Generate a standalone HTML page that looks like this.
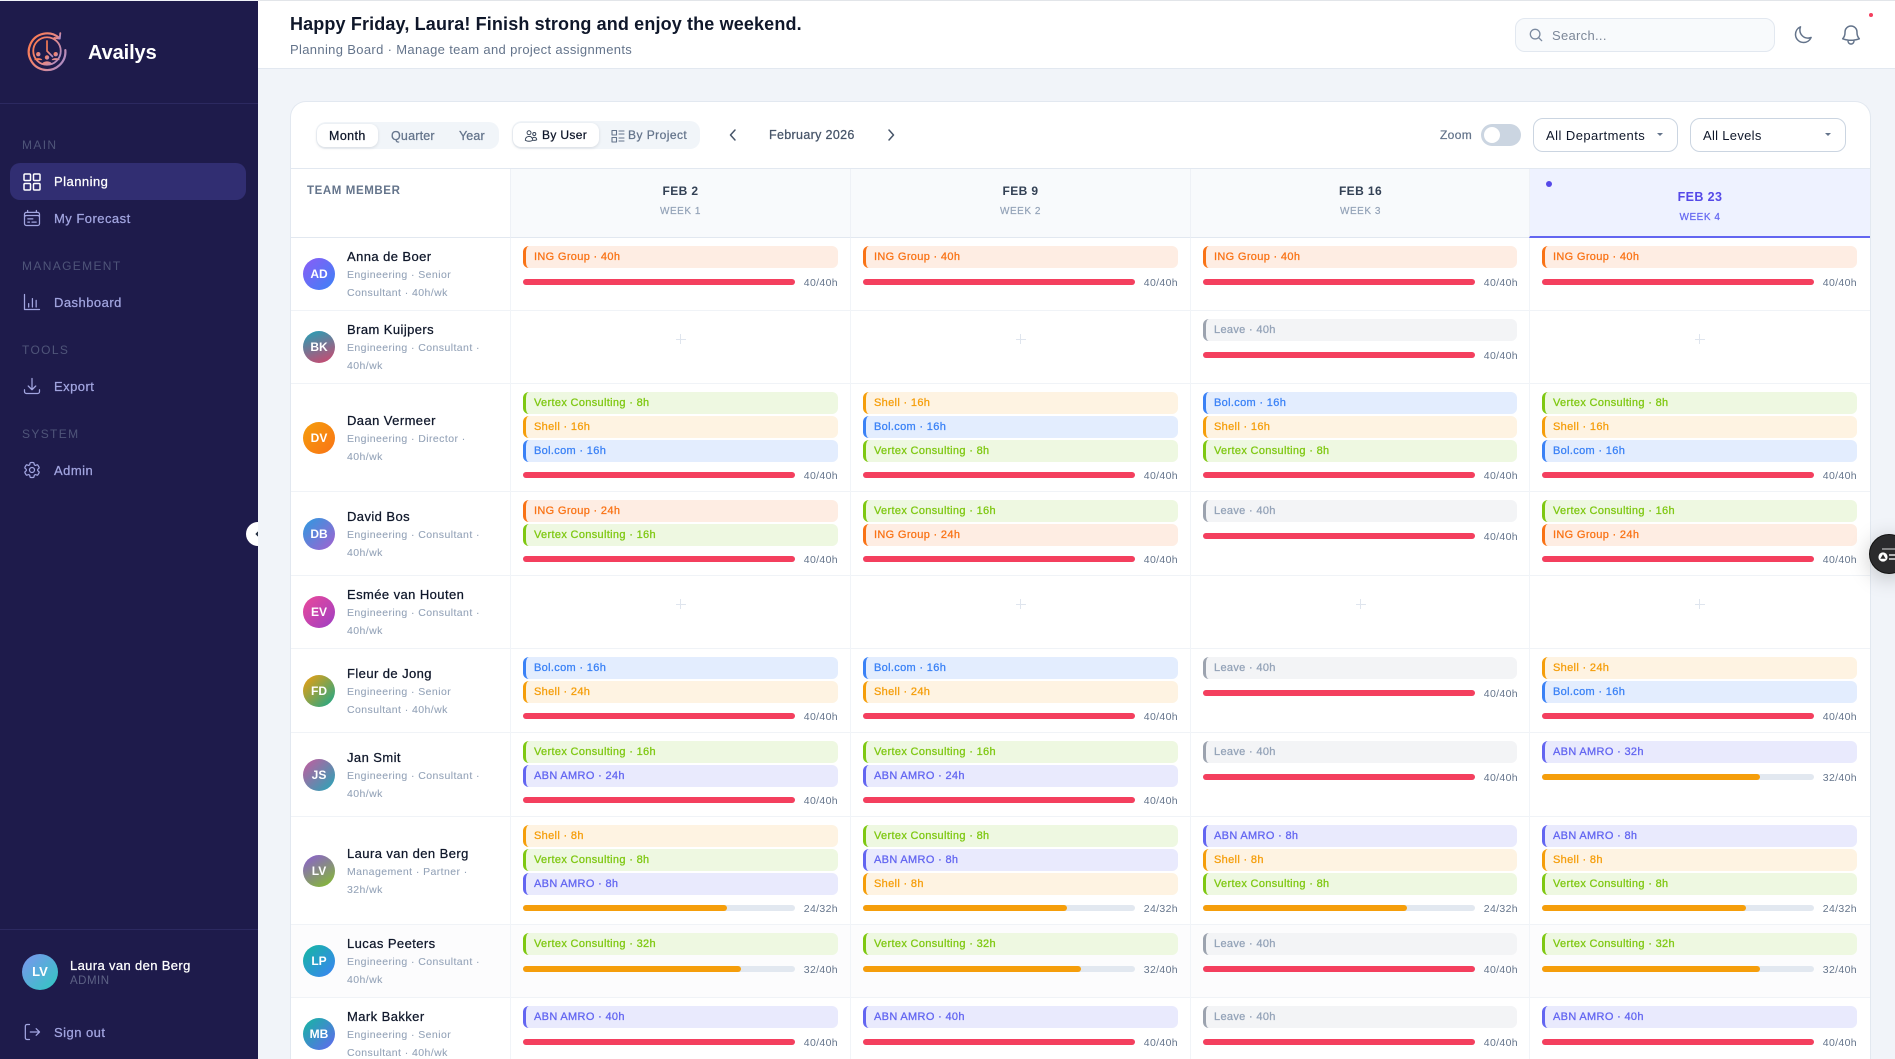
<!DOCTYPE html>
<html lang="en"><head><meta charset="utf-8"><title>Availys Planning</title>
<style>
html,body{margin:0;padding:0;width:1895px;height:1059px;overflow:hidden;background:#f1f4f9;font-family:"Liberation Sans",sans-serif;color:#0f172a}
*{box-sizing:border-box}
#wrap{position:relative;width:1895px;height:1059px;overflow:hidden;background:#f1f4f9}
.t{position:absolute;white-space:nowrap;line-height:16px}
.m{-webkit-text-stroke:.25px currentColor}
#side{position:absolute;left:0;top:1px;width:258px;height:1058px;background:#1e1b4b}
.sl{position:absolute;left:0;width:258px;height:1px;background:#2c2960}
.nh{left:22px;font-size:12px;letter-spacing:1.35px;color:#4f5579}
.ni{left:54px;font-size:13px;letter-spacing:.47px;color:#a2a5e0;-webkit-text-stroke:.25px currentColor}
.ic{position:absolute;fill:none;stroke:currentColor;stroke-width:1.5;stroke-linecap:round;stroke-linejoin:round;color:#a2a5e0}
#top{position:absolute;left:258px;top:0;width:1637px;height:69px;background:#fff;border-top:1px solid #e2e5e9;border-bottom:1px solid #e2e8f0}
#card{position:absolute;left:290px;top:101px;width:1581px;height:958px;background:#fff;border:1px solid #e2e8f0;border-bottom:0;border-radius:16px 16px 0 0}
.seg{position:absolute;background:#f1f5f9;border-radius:10px}
.pill{position:absolute;background:#fff;border-radius:8px;box-shadow:0 1px 3px rgba(15,23,42,.12)}
.sel{position:absolute;top:118px;height:34px;border:1px solid #cbd5e1;border-radius:10px;background:#fff}
.sel b{position:absolute;top:14px;width:0;height:0;border-left:3px solid transparent;border-right:3px solid transparent;border-top:3.5px solid #64748b}
.hd{position:absolute;top:169px;height:69px;width:340px;background:#f8fafc;border-left:1px solid #eef1f6;border-bottom:1px solid #e2e8f0;text-align:center}
.hd div{position:absolute;left:0;width:100%;white-space:nowrap}
.f{top:14px;font-size:12px;line-height:16px;font-weight:700;letter-spacing:.4px;color:#334155}
.w{top:35px;font-size:10px;line-height:16px;letter-spacing:.55px;color:#94a3b8;-webkit-text-stroke:.2px currentColor}
.ln{position:absolute;top:238px;width:1px;height:821px;background:#f1f4f8}
.r{position:absolute;left:291px;width:1579px;border-top:1px solid #f0f3f7}
.av{position:absolute;left:12px;top:50%;margin-top:-16px;width:32px;height:32px;border-radius:50%;color:#fff;font-size:12px;font-weight:700;line-height:32px;text-align:center}
.tm{position:absolute;left:56px;top:50%;margin-top:-26px;white-space:nowrap;font-size:10.5px;line-height:18px;color:#94a3b8;letter-spacing:.42px;-webkit-text-stroke:.08px currentColor}
.tm b{display:block;font-weight:400;font-size:13px;letter-spacing:.42px;color:#0f172a;-webkit-text-stroke:.25px currentColor}
.c{position:absolute;top:0;width:339px;padding:8px 12px 0}
.c1{left:220px}.c2{left:560px}.c3{left:900px}.c4{left:1239px}
.k{width:315px;height:21.6px;margin-bottom:2.4px;border-left:3px solid;border-radius:6px;padding-left:8px;font-size:11px;line-height:22px;letter-spacing:.33px;white-space:nowrap;-webkit-text-stroke:.28px currentColor}
.c3 .k{width:314px}
.i{background:#feede3;color:#f97316;border-color:#f97316}
.s{background:#fef3e2;color:#f59e0b;border-color:#f59e0b}
.v{background:#eef8e1;color:#7fc812;border-color:#7fc812}
.o{background:#e3edfe;color:#3b82f6;border-color:#3b82f6}
.a{background:#e9eafd;color:#6366f1;border-color:#6366f1}
.l{background:#f3f4f6;color:#94a3b8;border-color:#9ca3af}
.p{position:relative;width:272px;height:6px;margin-top:10.8px;background:#e2e8f0;border-radius:3px}
.k:first-child:nth-last-child(2)+.p{margin-top:11.4px}
.p i{display:block;height:6px;border-radius:3px}
.p u{position:absolute;left:272px;width:43px;top:-4px;line-height:16px;text-align:right;text-decoration:none;font-size:10.5px;letter-spacing:.35px;color:#64748b}
.R{width:100%;background:#f43f5e}.H{width:75%;background:#f59e0b}.E{width:80%;background:#f59e0b}
.pl{position:absolute;top:23px;left:50%;margin-left:-5px;width:10px;height:10px;background:linear-gradient(#dfe5ee,#dfe5ee) 0 4.5px/10px 1px no-repeat,linear-gradient(#dfe5ee,#dfe5ee) 4.5px 0/1px 10px no-repeat}
</style></head><body><div id="wrap">

<div id="side">
<svg style="position:absolute;left:25px;top:28px" width="44" height="44" viewBox="0 0 48 48" fill="none">
<defs><linearGradient id="lg" x1="0" y1="0.2" x2="1" y2="0.8"><stop offset="0" stop-color="#fb7a50"/><stop offset=".55" stop-color="#e58a8a"/><stop offset="1" stop-color="#a98cc8"/></linearGradient></defs>
<path d="M37 9.5A20 20 0 1 0 44 23" stroke="url(#lg)" stroke-width="2.4" stroke-linecap="round"/>
<path d="M38.5 4.5l-.6 6-6-.8" stroke="url(#lg)" stroke-width="2" stroke-linecap="round" stroke-linejoin="round"/>
<circle cx="24" cy="24" r="15" stroke="url(#lg)" stroke-width="2"/>
<path d="M24 13v11l6 6" stroke="url(#lg)" stroke-width="1.8" stroke-linecap="round" stroke-linejoin="round"/>
<circle cx="14.5" cy="27.5" r="2.4" fill="url(#lg)"/><circle cx="33.5" cy="27.5" r="2.4" fill="url(#lg)"/><circle cx="24" cy="31" r="2.4" fill="url(#lg)"/>
<path d="M10 34c1-3 8-3 9 0zM29 34c1-3 8-3 9 0zM18 39c1-5 11-5 12 0z" fill="url(#lg)"/>
</svg>
<div class="t" style="left:88px;top:42px;line-height:20px;font-size:20px;font-weight:700;color:#fff;letter-spacing:-.1px">Availys</div>
<div class="sl" style="top:102px"></div>
<div class="t nh" style="top:136px">MAIN</div>
<div style="position:absolute;left:10px;top:162px;width:236px;height:37px;border-radius:10px;background:#312e72"></div>
<svg class="ic" style="left:23px;top:172px;color:#fff" width="18" height="18" viewBox="0 0 18 18"><rect x="1" y="1" width="6.5" height="6.5" rx="1"/><rect x="10.5" y="1" width="6.5" height="6.5" rx="1"/><rect x="1" y="10.5" width="6.5" height="6.5" rx="1"/><rect x="10.5" y="10.5" width="6.5" height="6.5" rx="1"/></svg>
<div class="t ni" style="top:173px;color:#fff">Planning</div>
<svg class="ic" style="left:22px;top:207px" width="20" height="20" viewBox="0 0 24 24"><path d="M6.75 3v2.25M17.25 3v2.25M3 18.75V7.5a2.25 2.25 0 012.25-2.25h13.5A2.25 2.25 0 0121 7.5v11.25m-18 0A2.25 2.25 0 005.25 21h13.5A2.25 2.25 0 0021 18.75m-18 0v-7.5A2.25 2.25 0 015.25 9h13.5A2.25 2.25 0 0121 11.25v7.5"/><path d="M7 13h6M7 17h2M12 17h5"/></svg>
<div class="t ni" style="top:210px">My Forecast</div>
<div class="t nh" style="top:257px">MANAGEMENT</div>
<svg class="ic" style="left:22px;top:291px" width="20" height="20" viewBox="0 0 24 24"><path d="M3 3v18h18M8 18v-4M12.5 18V8M17 18v-8"/></svg>
<div class="t ni" style="top:294px">Dashboard</div>
<div class="t nh" style="top:341px">TOOLS</div>
<svg class="ic" style="left:22px;top:375px" width="20" height="20" viewBox="0 0 24 24"><path d="M3 16.5v2.25A2.25 2.25 0 005.25 21h13.5A2.25 2.25 0 0021 18.75V16.5M16.5 12L12 16.5m0 0L7.5 12m4.5 4.5V3"/></svg>
<div class="t ni" style="top:378px">Export</div>
<div class="t nh" style="top:425px">SYSTEM</div>
<svg class="ic" style="left:22px;top:459px" width="20" height="20" viewBox="0 0 24 24"><path d="M9.594 3.94c.09-.542.56-.94 1.11-.94h2.593c.55 0 1.02.398 1.11.94l.213 1.281c.063.374.313.686.645.87.074.04.147.083.22.127.325.196.72.257 1.075.124l1.217-.456a1.125 1.125 0 011.37.49l1.296 2.247a1.125 1.125 0 01-.26 1.431l-1.003.827c-.293.24-.438.613-.431.992a6.759 6.759 0 010 .255c-.007.378.138.75.43.99l1.005.828c.424.35.534.954.26 1.43l-1.298 2.247a1.125 1.125 0 01-1.369.491l-1.217-.456c-.355-.133-.75-.072-1.076.124a6.57 6.57 0 01-.22.128c-.331.183-.581.495-.644.869l-.213 1.28c-.09.543-.56.941-1.11.941h-2.594c-.55 0-1.02-.398-1.11-.94l-.213-1.281c-.062-.374-.312-.686-.644-.87a6.52 6.52 0 01-.22-.127c-.325-.196-.72-.257-1.076-.124l-1.217.456a1.125 1.125 0 01-1.369-.49l-1.297-2.247a1.125 1.125 0 01.26-1.431l1.004-.827c.292-.24.437-.613.43-.992a6.932 6.932 0 010-.255c.007-.378-.138-.75-.43-.99l-1.004-.828a1.125 1.125 0 01-.26-1.43l1.297-2.247a1.125 1.125 0 011.37-.491l1.216.456c.356.133.751.072 1.076-.124.072-.044.146-.087.22-.128.332-.183.582-.495.644-.869l.214-1.281z"/><circle cx="12" cy="12" r="3"/></svg>
<div class="t ni" style="top:462px">Admin</div>
<div class="sl" style="top:928px"></div>
<div style="position:absolute;left:22px;top:953px;width:36px;height:36px;border-radius:50%;background:linear-gradient(135deg,#7c93f0,#2fc9c0);color:#fff;font-size:13px;font-weight:700;line-height:36px;text-align:center">LV</div>
<div class="t m" style="left:70px;top:957px;font-size:13px;letter-spacing:.36px;color:#fff">Laura van den Berg</div>
<div class="t" style="left:70px;top:972px;font-size:11.5px;letter-spacing:.5px;color:#5d6285">ADMIN</div>
<svg class="ic" style="left:22px;top:1021px" width="20" height="20" viewBox="0 0 24 24"><path d="M9 3H6a2 2 0 00-2 2v14a2 2 0 002 2h3M10 12h11M17 8l4 4-4 4"/></svg>
<div class="t ni" style="top:1024px">Sign out</div>
</div>
<div style="position:absolute;left:246px;top:522px;width:12px;height:24px;background:#fff;border-radius:12px 0 0 12px"></div>
<svg style="position:absolute;left:255px;top:530px" width="3" height="8" viewBox="0 0 3 8" fill="none" stroke="#1e293b" stroke-width="1.6"><path d="M4.5 1L1.5 4l3 3"/></svg>

<div id="top">
<div class="t" style="left:32px;top:13px;line-height:20px;font-size:18px;font-weight:700;letter-spacing:.14px;color:#0f172a">Happy Friday, Laura! Finish strong and enjoy the weekend.</div>
<div class="t" style="left:32px;top:41px;font-size:13px;letter-spacing:.34px;color:#64748b">Planning Board · Manage team and project assignments</div>
</div>
<div style="position:absolute;left:1515px;top:18px;width:260px;height:34px;background:#f8fafc;border:1px solid #e2e8f0;border-radius:10px"></div>
<svg class="ic" style="left:1529px;top:28px;color:#7c8ba1" width="14" height="14" viewBox="0 0 16 16"><circle cx="7" cy="7" r="5.5"/><path d="M11 11l3.5 3.5"/></svg>
<div class="t" style="left:1552px;top:28px;font-size:13px;letter-spacing:.3px;color:#7c8798">Search...</div>
<svg class="ic" style="left:1793px;top:25px;color:#64748b;stroke-width:1.8" width="20" height="20" viewBox="0 0 24 24"><path d="M21.752 15.002A9.718 9.718 0 0118 15.75c-5.385 0-9.75-4.365-9.75-9.75 0-1.33.266-2.597.748-3.752A9.753 9.753 0 003 11.25C3 16.635 7.365 21 12.75 21a9.753 9.753 0 009.002-5.998z"/></svg>
<svg class="ic" style="left:1839px;top:23px;color:#64748b" width="24" height="24" viewBox="0 0 24 24"><path d="M14.857 17.082a23.848 23.848 0 005.454-1.31A8.967 8.967 0 0118 9.75v-.7V9A6 6 0 006 9v.75a8.967 8.967 0 01-2.312 6.022c1.733.64 3.56 1.085 5.455 1.31m5.714 0a24.255 24.255 0 01-5.714 0m5.714 0a3 3 0 11-5.714 0"/></svg>
<div style="position:absolute;left:1869px;top:13px;width:4px;height:4px;border-radius:50%;background:#f43f5e"></div>

<div id="card"></div>
<div class="seg" style="left:316px;top:122px;width:183px;height:27px"></div>
<div class="pill" style="left:317px;top:124px;width:61px;height:23px"></div>
<div class="t m" style="left:329px;top:128px;font-size:12.5px;letter-spacing:.4px;color:#0f172a">Month</div>
<div class="t m" style="left:391px;top:128px;font-size:12.5px;letter-spacing:.2px;color:#64748b">Quarter</div>
<div class="t m" style="left:459px;top:128px;font-size:12.5px;letter-spacing:.12px;color:#64748b">Year</div>
<div class="seg" style="left:512px;top:121px;width:188px;height:28px"></div>
<div class="pill" style="left:513px;top:123px;width:86px;height:24px"></div>
<svg class="ic" style="left:524px;top:129px;color:#334155;stroke-width:1.6" width="14" height="14" viewBox="0 0 24 24"><path d="M15 19.128a9.38 9.38 0 002.625.372 9.337 9.337 0 004.121-.952 4.125 4.125 0 00-7.533-2.493M15 19.128v-.003c0-1.113-.285-2.16-.786-3.07M15 19.128v.106A12.318 12.318 0 018.624 21c-2.331 0-4.512-.645-6.374-1.766l-.001-.109a6.375 6.375 0 0111.964-3.07M12 6.375a3.375 3.375 0 11-6.75 0 3.375 3.375 0 016.75 0zm8.25 2.25a2.625 2.625 0 11-5.25 0 2.625 2.625 0 015.25 0z"/></svg>
<div class="t m" style="left:542px;top:127px;font-size:12px;letter-spacing:.35px;color:#0f172a">By User</div>
<svg class="ic" style="left:611px;top:129px;color:#64748b;stroke-width:1.1" width="14" height="14" viewBox="0 0 14 14"><rect x="1" y="1.5" width="4.5" height="4.5"/><rect x="1" y="8.5" width="4.5" height="4.5"/><path d="M8 2h5M8 5h5M8 9h5M8 12h5"/></svg>
<div class="t m" style="left:628px;top:127px;font-size:12px;letter-spacing:.45px;color:#64748b">By Project</div>
<svg class="ic" style="left:728px;top:129px;color:#475569" width="10" height="12" viewBox="0 0 10 12"><path d="M7 1L2.5 6 7 11"/></svg>
<div class="t m" style="left:769px;top:127px;font-size:12.5px;letter-spacing:.34px;color:#475569">February 2026</div>
<svg class="ic" style="left:886px;top:129px;color:#475569" width="10" height="12" viewBox="0 0 10 12"><path d="M3 1l4.5 5L3 11"/></svg>
<div class="t m" style="left:1440px;top:127px;font-size:12px;letter-spacing:.35px;color:#64748b">Zoom</div>
<div style="position:absolute;left:1481px;top:124px;width:40px;height:22px;border-radius:11px;background:#cbd5e1"></div>
<div style="position:absolute;left:1484px;top:127px;width:16px;height:16px;border-radius:50%;background:#fff"></div>
<div class="sel" style="left:1533px;width:145px"><b style="left:123px"></b></div>
<div class="t" style="left:1546px;top:128px;font-size:13px;letter-spacing:.45px;color:#0f172a">All Departments</div>
<div class="sel" style="left:1690px;width:156px"><b style="left:134px"></b></div>
<div class="t" style="left:1703px;top:128px;font-size:13px;letter-spacing:.3px;color:#0f172a">All Levels</div>

<div style="position:absolute;left:291px;top:168px;width:1579px;height:1px;background:#e2e8f0"></div>
<div style="position:absolute;left:291px;top:237px;width:220px;height:1px;background:#e2e8f0"></div>
<div class="t" style="left:307px;top:183px;font-size:11.5px;font-weight:700;letter-spacing:.6px;color:#64748b">TEAM MEMBER</div>
<div class="hd" style="left:510px"><div class="f">FEB 2</div><div class="w">WEEK 1</div></div>
<div class="hd" style="left:850px"><div class="f">FEB 9</div><div class="w">WEEK 2</div></div>
<div class="hd" style="left:1190px"><div class="f">FEB 16</div><div class="w">WEEK 3</div></div>
<div class="hd" style="left:1529px;width:341px;background:#eef2ff;border-bottom:2px solid #6366f1"><div class="f" style="top:20px;color:#5549e8;font-size:12.5px">FEB 23</div><div class="w" style="top:41px;color:#6366f1">WEEK 4</div><span style="position:absolute;left:16px;top:12px;width:6px;height:6px;border-radius:50%;background:#5549e8"></span></div>

<div class="r" style="top:237px;height:73px;border-top:0"><div class="av" style="background:linear-gradient(135deg,#8b5cf6,#3b82f6)">AD</div><div class="tm"><b>Anna de Boer</b>Engineering · Senior<br>Consultant · 40h/wk</div>
<div class="c c1"><div class="k i" style="margin-top:1px">ING Group · 40h</div><div class="p"><i class="R"></i><u>40/40h</u></div></div>
<div class="c c2"><div class="k i" style="margin-top:1px">ING Group · 40h</div><div class="p"><i class="R"></i><u>40/40h</u></div></div>
<div class="c c3"><div class="k i" style="margin-top:1px">ING Group · 40h</div><div class="p"><i class="R"></i><u>40/40h</u></div></div>
<div class="c c4"><div class="k i" style="margin-top:1px">ING Group · 40h</div><div class="p"><i class="R"></i><u>40/40h</u></div></div></div>

<div class="r" style="top:310px;height:73px"><div class="av" style="background:linear-gradient(160deg,#1fa3b8,#d4446c)">BK</div><div class="tm"><b>Bram Kuijpers</b>Engineering · Consultant ·<br>40h/wk</div>
<div class="c c1"><div class="pl"></div></div><div class="c c2"><div class="pl"></div></div>
<div class="c c3"><div class="k l">Leave · 40h</div><div class="p"><i class="R"></i><u>40/40h</u></div></div>
<div class="c c4"><div class="pl"></div></div></div>

<div class="r" style="top:383px;height:108px"><div class="av" style="background:linear-gradient(135deg,#f59e0b,#f97316)">DV</div><div class="tm"><b>Daan Vermeer</b>Engineering · Director ·<br>40h/wk</div>
<div class="c c1"><div class="k v">Vertex Consulting · 8h</div><div class="k s">Shell · 16h</div><div class="k o">Bol.com · 16h</div><div class="p"><i class="R"></i><u>40/40h</u></div></div>
<div class="c c2"><div class="k s">Shell · 16h</div><div class="k o">Bol.com · 16h</div><div class="k v">Vertex Consulting · 8h</div><div class="p"><i class="R"></i><u>40/40h</u></div></div>
<div class="c c3"><div class="k o">Bol.com · 16h</div><div class="k s">Shell · 16h</div><div class="k v">Vertex Consulting · 8h</div><div class="p"><i class="R"></i><u>40/40h</u></div></div>
<div class="c c4"><div class="k v">Vertex Consulting · 8h</div><div class="k s">Shell · 16h</div><div class="k o">Bol.com · 16h</div><div class="p"><i class="R"></i><u>40/40h</u></div></div></div>

<div class="r" style="top:491px;height:84px"><div class="av" style="background:linear-gradient(135deg,#2b9be0,#a560d0)">DB</div><div class="tm"><b>David Bos</b>Engineering · Consultant ·<br>40h/wk</div>
<div class="c c1"><div class="k i">ING Group · 24h</div><div class="k v">Vertex Consulting · 16h</div><div class="p"><i class="R"></i><u>40/40h</u></div></div>
<div class="c c2"><div class="k v">Vertex Consulting · 16h</div><div class="k i">ING Group · 24h</div><div class="p"><i class="R"></i><u>40/40h</u></div></div>
<div class="c c3"><div class="k l">Leave · 40h</div><div class="p"><i class="R"></i><u>40/40h</u></div></div>
<div class="c c4"><div class="k v">Vertex Consulting · 16h</div><div class="k i">ING Group · 24h</div><div class="p"><i class="R"></i><u>40/40h</u></div></div></div>

<div class="r" style="top:575px;height:73px"><div class="av" style="background:linear-gradient(135deg,#ec4899,#9d3fc4)">EV</div><div class="tm"><b>Esmée van Houten</b>Engineering · Consultant ·<br>40h/wk</div>
<div class="c c1"><div class="pl"></div></div><div class="c c2"><div class="pl"></div></div><div class="c c3"><div class="pl"></div></div><div class="c c4"><div class="pl"></div></div></div>

<div class="r" style="top:648px;height:84px"><div class="av" style="background:linear-gradient(135deg,#f59e0b,#14a88f)">FD</div><div class="tm"><b>Fleur de Jong</b>Engineering · Senior<br>Consultant · 40h/wk</div>
<div class="c c1"><div class="k o">Bol.com · 16h</div><div class="k s">Shell · 24h</div><div class="p"><i class="R"></i><u>40/40h</u></div></div>
<div class="c c2"><div class="k o">Bol.com · 16h</div><div class="k s">Shell · 24h</div><div class="p"><i class="R"></i><u>40/40h</u></div></div>
<div class="c c3"><div class="k l">Leave · 40h</div><div class="p"><i class="R"></i><u>40/40h</u></div></div>
<div class="c c4"><div class="k s">Shell · 24h</div><div class="k o">Bol.com · 16h</div><div class="p"><i class="R"></i><u>40/40h</u></div></div></div>

<div class="r" style="top:732px;height:84px"><div class="av" style="background:linear-gradient(135deg,#c85a9e,#22a8b8)">JS</div><div class="tm"><b>Jan Smit</b>Engineering · Consultant ·<br>40h/wk</div>
<div class="c c1"><div class="k v">Vertex Consulting · 16h</div><div class="k a">ABN AMRO · 24h</div><div class="p"><i class="R"></i><u>40/40h</u></div></div>
<div class="c c2"><div class="k v">Vertex Consulting · 16h</div><div class="k a">ABN AMRO · 24h</div><div class="p"><i class="R"></i><u>40/40h</u></div></div>
<div class="c c3"><div class="k l">Leave · 40h</div><div class="p"><i class="R"></i><u>40/40h</u></div></div>
<div class="c c4"><div class="k a">ABN AMRO · 32h</div><div class="p"><i class="E"></i><u>32/40h</u></div></div></div>

<div class="r" style="top:816px;height:108px"><div class="av" style="background:linear-gradient(150deg,#8b5cd6,#84c02a)">LV</div><div class="tm"><b>Laura van den Berg</b>Management · Partner ·<br>32h/wk</div>
<div class="c c1"><div class="k s">Shell · 8h</div><div class="k v">Vertex Consulting · 8h</div><div class="k a">ABN AMRO · 8h</div><div class="p"><i class="H"></i><u>24/32h</u></div></div>
<div class="c c2"><div class="k v">Vertex Consulting · 8h</div><div class="k a">ABN AMRO · 8h</div><div class="k s">Shell · 8h</div><div class="p"><i class="H"></i><u>24/32h</u></div></div>
<div class="c c3"><div class="k a">ABN AMRO · 8h</div><div class="k s">Shell · 8h</div><div class="k v">Vertex Consulting · 8h</div><div class="p"><i class="H"></i><u>24/32h</u></div></div>
<div class="c c4"><div class="k a">ABN AMRO · 8h</div><div class="k s">Shell · 8h</div><div class="k v">Vertex Consulting · 8h</div><div class="p"><i class="H"></i><u>24/32h</u></div></div></div>

<div class="r" style="top:924px;height:73px;background:#fcfcfd"><div class="av" style="background:linear-gradient(135deg,#14b8a0,#3b82f6)">LP</div><div class="tm"><b>Lucas Peeters</b>Engineering · Consultant ·<br>40h/wk</div>
<div class="c c1"><div class="k v">Vertex Consulting · 32h</div><div class="p"><i class="E"></i><u>32/40h</u></div></div>
<div class="c c2"><div class="k v">Vertex Consulting · 32h</div><div class="p"><i class="E"></i><u>32/40h</u></div></div>
<div class="c c3"><div class="k l">Leave · 40h</div><div class="p"><i class="R"></i><u>40/40h</u></div></div>
<div class="c c4"><div class="k v">Vertex Consulting · 32h</div><div class="p"><i class="E"></i><u>32/40h</u></div></div></div>

<div class="r" style="top:997px;height:62px"><div class="av" style="top:36px;background:linear-gradient(135deg,#14b8a0,#6366f1)">MB</div><div class="tm" style="top:36px"><b>Mark Bakker</b>Engineering · Senior<br>Consultant · 40h/wk</div>
<div class="c c1"><div class="k a">ABN AMRO · 40h</div><div class="p"><i class="R"></i><u>40/40h</u></div></div>
<div class="c c2"><div class="k a">ABN AMRO · 40h</div><div class="p"><i class="R"></i><u>40/40h</u></div></div>
<div class="c c3"><div class="k l">Leave · 40h</div><div class="p"><i class="R"></i><u>40/40h</u></div></div>
<div class="c c4"><div class="k a">ABN AMRO · 40h</div><div class="p"><i class="R"></i><u>40/40h</u></div></div></div>

<div class="ln" style="left:510px"></div><div class="ln" style="left:850px"></div><div class="ln" style="left:1190px"></div><div class="ln" style="left:1529px"></div>

<div style="position:absolute;left:1869px;top:534px;width:40px;height:40px;border-radius:50%;background:#2b2b2d;border:1px solid #111;box-shadow:0 4px 22px rgba(0,0,0,.22)"></div>
<svg style="position:absolute;left:1876px;top:544px" width="19" height="20" viewBox="0 0 19 20"><path d="M6 5h13" stroke="#a3a3a3" stroke-width="1.5"/><path d="M13 11h6M13 15h6" stroke="#e5e5e5" stroke-width="1.4"/><circle cx="7" cy="13" r="4.6" fill="#fff"/><path d="M7 10.2l2.7 4.6H4.3z" fill="#2b2b2d"/></svg>
</div></body></html>
